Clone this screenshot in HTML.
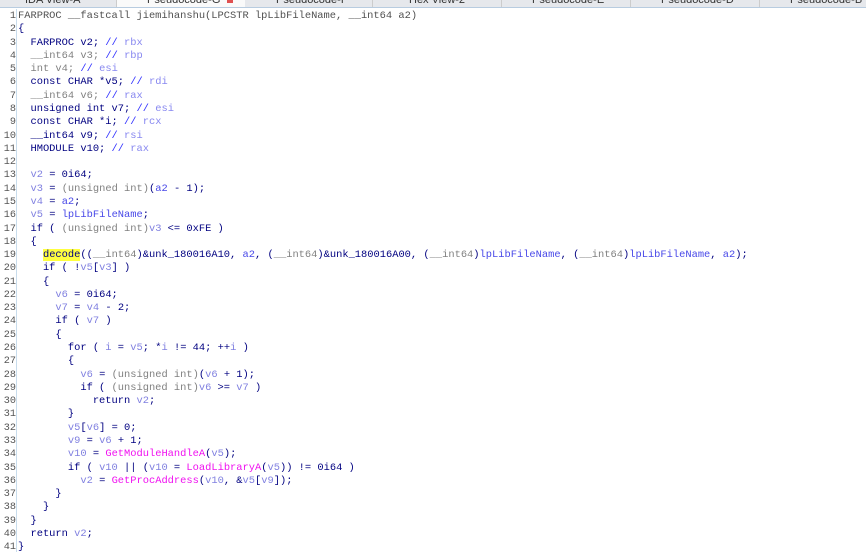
<!DOCTYPE html>
<html><head><meta charset="utf-8"><style>
body{margin:0;width:866px;height:552px;background:#fff;overflow:hidden;position:relative;font-family:"Liberation Mono",monospace;}
.tabs{position:absolute;left:0;top:0;width:866px;height:7px;background:#e6e8ec;border-bottom:1px solid #b8cce0;overflow:hidden;font-family:"Liberation Sans",sans-serif;font-size:11px;color:#333;}
.tab{position:absolute;top:-7px;height:14px;line-height:14px;white-space:nowrap;}
.gut{position:absolute;left:0;top:9px;width:16px;border-right:1px solid #c8dcec;height:543px;}
pre{margin:0;position:absolute;top:10px;left:0;font-size:10.4px;line-height:13.28px;color:#000080;}
.n{display:inline-block;width:16px;text-align:right;color:#555;margin-right:2px;font-size:10.2px;}
.h{color:#505050}
.v{color:#8080e0}
.c{color:#808080}
.f{color:#f010f0}
.a{color:#4848e8}
.cm{color:#3030ff}
.cr{color:#8888f0}
.y{background:#ffff40}
</style></head><body>
<div class="tabs">
<div class="tab" style="left:0;width:116px;border-right:1px solid #ccc"><span style="margin-left:25px">IDA View-A</span></div>
<div class="tab" style="left:117px;width:128px;background:#fafafa"><span style="margin-left:30px">Pseudocode-G</span><span style="position:absolute;left:110px;top:4px;width:6px;height:6px;background:#e05050"></span></div>
<div class="tab" style="left:246px;width:126px;border-right:1px solid #ccc"><span style="margin-left:30px">Pseudocode-F</span></div>
<div class="tab" style="left:373px;width:128px;border-right:1px solid #ccc"><span style="margin-left:36px">Hex View-2</span></div>
<div class="tab" style="left:502px;width:128px;border-right:1px solid #ccc"><span style="margin-left:30px">Pseudocode-E</span></div>
<div class="tab" style="left:631px;width:128px;border-right:1px solid #ccc"><span style="margin-left:30px">Pseudocode-D</span></div>
<div class="tab" style="left:760px;width:110px"><span style="margin-left:30px">Pseudocode-B</span></div>
</div>
<div class="gut"></div>
<pre><span class="n">1</span><span class="h">FARPROC __fastcall jiemihanshu(LPCSTR lpLibFileName, __int64 a2)</span>
<span class="n">2</span>{
<span class="n">3</span>  FARPROC v2; <span class="cm">//</span> <span class="cr">rbx</span>
<span class="n">4</span>  <span class="c">__int64 v3;</span> <span class="cm">//</span> <span class="cr">rbp</span>
<span class="n">5</span>  <span class="c">int v4;</span> <span class="cm">//</span> <span class="cr">esi</span>
<span class="n">6</span>  const CHAR *v5; <span class="cm">//</span> <span class="cr">rdi</span>
<span class="n">7</span>  <span class="c">__int64 v6;</span> <span class="cm">//</span> <span class="cr">rax</span>
<span class="n">8</span>  unsigned int v7; <span class="cm">//</span> <span class="cr">esi</span>
<span class="n">9</span>  const CHAR *i; <span class="cm">//</span> <span class="cr">rcx</span>
<span class="n">10</span>  __int64 v9; <span class="cm">//</span> <span class="cr">rsi</span>
<span class="n">11</span>  HMODULE v10; <span class="cm">//</span> <span class="cr">rax</span>
<span class="n">12</span>
<span class="n">13</span>  <span class="v">v2</span> = 0i64;
<span class="n">14</span>  <span class="v">v3</span> = <span class="c">(unsigned int)</span>(<span class="a">a2</span> - 1);
<span class="n">15</span>  <span class="v">v4</span> = <span class="a">a2</span>;
<span class="n">16</span>  <span class="v">v5</span> = <span class="a">lpLibFileName</span>;
<span class="n">17</span>  if ( <span class="c">(unsigned int)</span><span class="v">v3</span> &lt;= 0xFE )
<span class="n">18</span>  {
<span class="n">19</span>    <span class="y">decode</span>((<span class="c">__int64</span>)&amp;unk_180016A10, <span class="a">a2</span>, (<span class="c">__int64</span>)&amp;unk_180016A00, (<span class="c">__int64</span>)<span class="a">lpLibFileName</span>, (<span class="c">__int64</span>)<span class="a">lpLibFileName</span>, <span class="a">a2</span>);
<span class="n">20</span>    if ( !<span class="v">v5</span>[<span class="v">v3</span>] )
<span class="n">21</span>    {
<span class="n">22</span>      <span class="v">v6</span> = 0i64;
<span class="n">23</span>      <span class="v">v7</span> = <span class="v">v4</span> - 2;
<span class="n">24</span>      if ( <span class="v">v7</span> )
<span class="n">25</span>      {
<span class="n">26</span>        for ( <span class="v">i</span> = <span class="v">v5</span>; *<span class="v">i</span> != 44; ++<span class="v">i</span> )
<span class="n">27</span>        {
<span class="n">28</span>          <span class="v">v6</span> = <span class="c">(unsigned int)</span>(<span class="v">v6</span> + 1);
<span class="n">29</span>          if ( <span class="c">(unsigned int)</span><span class="v">v6</span> &gt;= <span class="v">v7</span> )
<span class="n">30</span>            return <span class="v">v2</span>;
<span class="n">31</span>        }
<span class="n">32</span>        <span class="v">v5</span>[<span class="v">v6</span>] = 0;
<span class="n">33</span>        <span class="v">v9</span> = <span class="v">v6</span> + 1;
<span class="n">34</span>        <span class="v">v10</span> = <span class="f">GetModuleHandleA</span>(<span class="v">v5</span>);
<span class="n">35</span>        if ( <span class="v">v10</span> || (<span class="v">v10</span> = <span class="f">LoadLibraryA</span>(<span class="v">v5</span>)) != 0i64 )
<span class="n">36</span>          <span class="v">v2</span> = <span class="f">GetProcAddress</span>(<span class="v">v10</span>, &amp;<span class="v">v5</span>[<span class="v">v9</span>]);
<span class="n">37</span>      }
<span class="n">38</span>    }
<span class="n">39</span>  }
<span class="n">40</span>  return <span class="v">v2</span>;
<span class="n">41</span>}</pre>
</body></html>
